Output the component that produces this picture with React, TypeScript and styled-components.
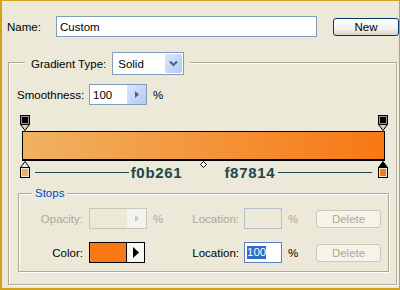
import React from "react";
import styled, { createGlobalStyle } from "styled-components";

const Global = createGlobalStyle`
  html, body { margin: 0; padding: 0; background: #ece9d8; }
  body { font-family: "Liberation Sans", Arial, sans-serif; font-size: 11.5px; color: #000; }
  * { box-sizing: border-box; }
`;

const Frame = styled.div`
  width: 400px;
  height: 290px;
  border-style: solid;
  border-color: #d4a21a;
  border-width: 1px 1px 2px 2px;
  background: #ece9d8;
  overflow: hidden;
  padding-top: 15px;
  display: flex;
  flex-direction: column;
`;

const NameRow = styled.div`
  display: flex;
  align-items: center;
  height: 21px;
  padding-left: 5px;
`;

const Label = styled.span<{ $w?: number; $right?: boolean; $disabled?: boolean }>`
  display: inline-block;
  flex: none;
  width: ${(p) => (p.$w ? `${p.$w}px` : "auto")};
  text-align: ${(p) => (p.$right ? "right" : "left")};
  color: ${(p) => (p.$disabled ? "#aca899" : "#000")};
  white-space: nowrap;
`;

const TextField = styled.div<{ $w: number; $h?: number }>`
  flex: none;
  width: ${(p) => p.$w}px;
  height: ${(p) => p.$h ?? 21}px;
  border: 1px solid #7f9db9;
  background: #fff;
  display: flex;
  align-items: center;
  padding-left: 3px;
`;

const NewButton = styled.div`
  flex: none;
  margin-left: 16px;
  width: 66px;
  height: 18px;
  border: 1px solid #003c74;
  border-radius: 3px;
  background: linear-gradient(#ffffff, #f3f2ec 60%, #d8d4c8);
  display: flex;
  align-items: center;
  justify-content: center;
`;

const GroupBox = styled.div<{ $ml: number; $mt: number; $w: number; $h: number }>`
  margin: ${(p) => p.$mt}px 0 0 ${(p) => p.$ml}px;
  width: ${(p) => p.$w}px;
  height: ${(p) => p.$h}px;
  flex: none;
  border: 1px solid #aca899;
  box-shadow: 1px 1px 0 #fff, inset 1px 1px 0 #fff;
  display: flex;
  flex-direction: column;
`;

const Legend = styled.div<{ $mt: number; $ml: number; $px: number }>`
  align-self: flex-start;
  margin: ${(p) => p.$mt}px 0 0 ${(p) => p.$ml}px;
  padding: 0 ${(p) => p.$px}px;
  background: #ece9d8;
  display: flex;
  align-items: center;
  gap: 6px;
`;

const StopsTitle = styled.span`
  color: #0046d5;
  line-height: 13px;
`;

const Select = styled.div`
  width: 72px;
  height: 23px;
  border: 1px solid #7f9db9;
  background: #fff;
  display: flex;
  align-items: center;
  padding: 1px;
`;

const SelectValue = styled.span`
  flex: 1;
  padding-left: 4px;
`;

const DropButton = styled.div`
  width: 17px;
  height: 100%;
  border-radius: 2px;
  background: linear-gradient(135deg, #dce6fd, #b4c8f6);
  display: flex;
  align-items: center;
  justify-content: center;
`;

const Row = styled.div<{ $mt: number; $pl: number }>`
  display: flex;
  align-items: center;
  height: 21px;
  margin-top: ${(p) => p.$mt}px;
  padding-left: ${(p) => p.$pl}px;
`;

const SpinField = styled.div<{ $disabled?: boolean }>`
  flex: none;
  width: 58px;
  height: 21px;
  border: 1px solid ${(p) => (p.$disabled ? "#c9c7ba" : "#7f9db9")};
  background: ${(p) => (p.$disabled ? "#ece9d8" : "#fff")};
  display: flex;
  align-items: stretch;
`;

const SpinValue = styled.span`
  flex: 1;
  display: flex;
  align-items: center;
  padding-left: 3px;
`;

const SpinButton = styled.div<{ $disabled?: boolean }>`
  width: 19px;
  background: ${(p) =>
    p.$disabled ? "#f4f3ee" : "linear-gradient(135deg, #dce6fd, #b4c8f6)"};
  display: flex;
  align-items: center;
  justify-content: center;
`;

const Percent = styled.span<{ $w: number; $disabled?: boolean }>`
  flex: none;
  width: ${(p) => p.$w}px;
  padding-left: 6px;
  color: ${(p) => (p.$disabled ? "#aca899" : "#000")};
`;

const Editor = styled.div`
  margin: 10px 0 0 11px;
  width: 368px;
  display: flex;
  flex-direction: column;
`;

const MarkerTrack = styled.div<{ $h: number }>`
  position: relative;
  height: ${(p) => p.$h}px;
`;

const Marker = styled.div<{ $left: number }>`
  position: absolute;
  top: 0;
  left: ${(p) => p.$left}px;
  line-height: 0;
`;

const Bar = styled.div`
  height: 30px;
  margin: 0 3px 0 2px;
  border: 1px solid #000;
  border-bottom-width: 2px;
  background: linear-gradient(to right, #f0b261, #f87814);
`;

const HexRow = styled.div`
  display: flex;
  align-items: center;
  height: 100%;
  padding: 4px 16px 0 15px;
`;

const HexLine = styled.div`
  flex: 1;
  height: 1px;
  background: #1c474c;
`;

const HexText = styled.span<{ $ml: number; $mr: number }>`
  font-family: "Liberation Sans", Arial, sans-serif;
  font-weight: bold;
  font-size: 15px;
  line-height: 15px;
  letter-spacing: 0.7px;
  color: #1c474c;
  margin: 0 ${(p) => p.$mr}px 0 ${(p) => p.$ml}px;
`;

const Gap = styled.div<{ $w: number }>`
  width: ${(p) => p.$w}px;
  flex: none;
`;

const LocField = styled.div<{ $disabled?: boolean; $focus?: boolean }>`
  flex: none;
  width: 38px;
  height: 21px;
  border: 1px solid
    ${(p) => (p.$disabled ? "#b3bfcc" : p.$focus ? "#5b7fbf" : "#7f9db9")};
  background: ${(p) => (p.$disabled ? "#ece9d8" : "#fff")};
  display: flex;
  align-items: center;
  padding-left: 2px;
`;

const Selected = styled.span`
  background: #316ac5;
  color: #fff;
  line-height: 13px;
`;

const DeleteButton = styled.div`
  flex: none;
  width: 65px;
  height: 18px;
  border: 1px solid #c9c7ba;
  border-radius: 3px;
  background: #f5f4ea;
  color: #aca899;
  display: flex;
  align-items: center;
  justify-content: center;
`;

const ColorPick = styled.div`
  flex: none;
  width: 58px;
  height: 21px;
  display: flex;
`;

const Swatch = styled.div`
  width: 38px;
  border: 1px solid #000;
  background: #f87814;
`;

const PickButton = styled.div`
  width: 18px;
  border: 1px solid #000;
  border-left: none;
  background: #f7f7f4;
  display: flex;
  align-items: center;
  justify-content: center;
`;

const Chevron = () => (
  <svg width="9" height="7" viewBox="0 0 9 7">
    <path d="M1 1.5 L4.5 5 L8 1.5" fill="none" stroke="#4d6185" strokeWidth="2" />
  </svg>
);

const SmallArrow = ({ color }: { color: string }) => (
  <svg width="4" height="7" viewBox="0 0 4 7">
    <path d="M0 0 L4 3.5 L0 7 Z" fill={color} />
  </svg>
);

const BigArrow = () => (
  <svg width="6" height="11" viewBox="0 0 6 11">
    <path d="M0 0 L6 5.5 L0 11 Z" fill="#000" />
  </svg>
);

const TopStop = () => (
  <svg width="10" height="16" viewBox="0 0 10 16">
    <rect x="0.5" y="0.5" width="9" height="9" fill="#9a9a9a" stroke="#000" />
    <rect x="2" y="2" width="6" height="6" fill="#000" />
    <path d="M0.5 9.5 L9.5 9.5 L5 15.5 Z" fill="#d4d0c8" stroke="#000" />
  </svg>
);

const BottomStop = ({ fill, selected }: { fill: string; selected?: boolean }) => (
  <svg width="10" height="17" viewBox="0 0 10 17">
    <path d="M5 0.5 L9.5 6.5 L0.5 6.5 Z" fill={selected ? "#000" : "#ece9d8"} stroke="#000" />
    <rect x="0.5" y="6.5" width="9" height="10" fill="#e8e8e8" stroke="#000" />
    <rect x="2" y="8" width="6" height="7" fill={fill} />
  </svg>
);

const Diamond = () => (
  <svg width="7" height="7" viewBox="0 0 7 7">
    <path d="M3.5 0.5 L6.5 3.5 L3.5 6.5 L0.5 3.5 Z" fill="#fff" stroke="#000" />
  </svg>
);

export default function App() {
  return (
    <>
      <Global />
      <Frame>
        <NameRow>
          <Label $w={49}>Name:</Label>
          <TextField $w={261}>Custom</TextField>
          <NewButton>New</NewButton>
        </NameRow>

        <GroupBox $ml={6} $mt={25} $w={389} $h={223}>
          <Legend $mt={-11} $ml={16} $px={6}>
            <Label>Gradient Type:</Label>
            <Select>
              <SelectValue>Solid</SelectValue>
              <DropButton>
                <Chevron />
              </DropButton>
            </Select>
          </Legend>

          <Row $mt={9} $pl={8}>
            <Label $w={72}>Smoothness:</Label>
            <SpinField>
              <SpinValue>100</SpinValue>
              <SpinButton>
                <SmallArrow color="#4d6185" />
              </SpinButton>
            </SpinField>
            <Percent $w={20}>%</Percent>
          </Row>

          <Editor>
            <MarkerTrack $h={16}>
              <Marker $left={0}>
                <TopStop />
              </Marker>
              <Marker $left={358}>
                <TopStop />
              </Marker>
            </MarkerTrack>
            <Bar />
            <MarkerTrack $h={18}>
              <Marker $left={0}>
                <BottomStop fill="#f0b261" />
              </Marker>
              <Marker $left={358}>
                <BottomStop fill="#f87814" selected />
              </Marker>
              <Marker $left={180}>
                <Diamond />
              </Marker>
              <HexRow>
                <HexLine />
                <HexText $ml={2} $mr={0}>f0b261</HexText>
                <Gap $w={42} />
                <HexText $ml={0} $mr={3}>f87814</HexText>
                <HexLine />
              </HexRow>
            </MarkerTrack>
          </Editor>

          <GroupBox $ml={9} $mt={14} $w={371} $h={79}>
            <Legend $mt={-7} $ml={13} $px={3}>
              <StopsTitle>Stops</StopsTitle>
            </Legend>
            <Row $mt={8} $pl={0}>
              <Label $w={64} $right $disabled>Opacity:</Label>
              <Gap $w={6} />
              <SpinField $disabled>
                <SpinValue />
                <SpinButton $disabled>
                  <SmallArrow color="#c9c7ba" />
                </SpinButton>
              </SpinField>
              <Percent $w={20} $disabled>%</Percent>
              <Label $w={72} $right $disabled>Location:</Label>
              <Gap $w={5} />
              <LocField $disabled />
              <Percent $w={34} $disabled>%</Percent>
              <DeleteButton>Delete</DeleteButton>
            </Row>
            <Row $mt={13} $pl={0}>
              <Label $w={64} $right>Color:</Label>
              <Gap $w={6} />
              <ColorPick>
                <Swatch />
                <PickButton>
                  <BigArrow />
                </PickButton>
              </ColorPick>
              <Percent $w={20} />
              <Label $w={72} $right>Location:</Label>
              <Gap $w={5} />
              <LocField $focus>
                <Selected>100</Selected>
              </LocField>
              <Percent $w={34}>%</Percent>
              <DeleteButton>Delete</DeleteButton>
            </Row>
          </GroupBox>
        </GroupBox>
      </Frame>
    </>
  );
}
